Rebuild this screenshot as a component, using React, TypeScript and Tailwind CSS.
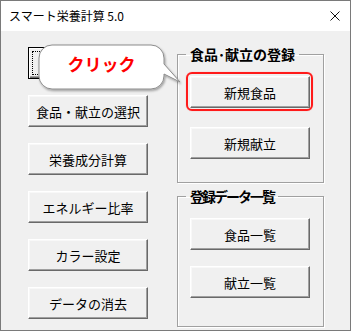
import type { ReactNode } from "react";

const font = { fontFamily: '"Noto Sans CJK JP", "Noto Sans", sans-serif' };

const Btn = ({ label, className = "", focused = false }: { label: string, className?: string, focused?: boolean }) => (
  <button
    className={`relative h-[32px] w-[120px] bg-[#f0f0f0] text-[13px] leading-none text-black ${focused
      ? "border border-black shadow-[inset_1px_1px_0_#ffffff,inset_-1px_-1px_0_#696969,inset_-2px_-2px_0_#a0a0a0]"
      : "border border-t-white border-l-white border-r-[#696969] border-b-[#696969] shadow-[inset_-1px_-1px_0_#a0a0a0,inset_1px_1px_0_#f8f8f8]"
      } ${className}`}
  >
    {focused && <span className="absolute inset-[3px] border border-dotted border-black" />}
    <span className="relative">{label}</span>
  </button>
)

const Group = ({ title, children, className = "", legendClass = "" }: { title: string, children: ReactNode, className?: string, legendClass?: string }) => (
  <fieldset className={`w-[147px] border border-[#a0a0a0] shadow-[1px_1px_0_#ffffff,inset_1px_1px_0_#ffffff] ${className}`}>
    <legend className={`ml-[8px] h-[16px] px-[4px] text-[14px] font-bold leading-[16px] text-black ${legendClass}`}>{title}</legend>
    {children}
  </fieldset>
)

const App = () => {
  return (
    <div className="relative h-[331px] w-[351px] overflow-hidden border border-[#7a7a7a] bg-[#f0f0f0]" style={font}>
      <div className="flex h-[30px] items-center justify-between bg-white pl-[8px] pr-[9px]">
        <span className="text-[12px] text-black">スマート栄養計算 5.0</span>
        <svg width="10" height="10" viewBox="0 0 10 10" className="mr-[1px]">
          <path d="M0.5 0.5 L9.5 9.5 M9.5 0.5 L0.5 9.5" stroke="#111" strokeWidth="1" />
        </svg>
      </div>

      <div className="flex pl-[27px]">
        <div className="flex w-[120px] flex-col gap-[16px] pt-[16px]">
          <Btn label="" focused />
          <Btn label="食品・献立の選択" />
          <Btn label="栄養成分計算" />
          <Btn label="エネルギー比率" />
          <Btn label="カラー設定" />
          <Btn label="データの消去" />
        </div>

        <div className="ml-[29px] flex flex-col pt-[15px]">
          <Group title="食品･献立の登録" className="pb-[23px]">
            <div className="flex flex-col gap-[19px] pl-[12px] pt-[14px]">
              <div className="relative w-[119px]">
                <Btn label="新規食品" className="w-[119px]" />
                <span className="absolute -bottom-[3px] -left-[4px] -right-[4px] -top-[4px] rounded-[6px] border-2 border-[#ff1a1a] shadow-[0_0_1px_#ff8080]" />
              </div>
              <Btn label="新規献立" className="w-[119px]" />
            </div>
          </Group>
          <Group title="登録データ一覧" className="mt-[5px] pb-[28px]" legendClass="tracking-[-2px]">
            <div className="flex flex-col gap-[16px] pl-[12px] pt-[14px]">
              <Btn label="食品一覧" className="w-[119px]" />
              <Btn label="献立一覧" className="w-[119px]" />
            </div>
          </Group>
        </div>
      </div>

      <svg className="absolute left-[35px] top-[41px]" width="150" height="54" viewBox="0 0 150 54">
        <defs>
          <filter id="sh" x="-10%" y="-20%" width="130%" height="150%">
            <feDropShadow dx="1" dy="1.5" stdDeviation="1.2" floodColor="#000" floodOpacity="0.35" />
          </filter>
        </defs>
        <path
          d="M15 2 H114 A13 13 0 0 1 127 15 V21 L143 39 L127 31 V33 A13 13 0 0 1 114 46 H15 A13 13 0 0 1 2 33 V15 A13 13 0 0 1 15 2 Z"
          transform="translate(1 1)"
          fill="#ffffff"
          stroke="#8c8c8c"
          strokeWidth="1"
          filter="url(#sh)"
        />
      </svg>
      <div className="absolute left-[38px] top-[44px] flex h-[44px] w-[125px] items-center justify-center pb-[6px]">
        <span className="text-[17px] font-bold text-[#ff0000]">クリック</span>
      </div>
    </div>
  )
}

export default App;
